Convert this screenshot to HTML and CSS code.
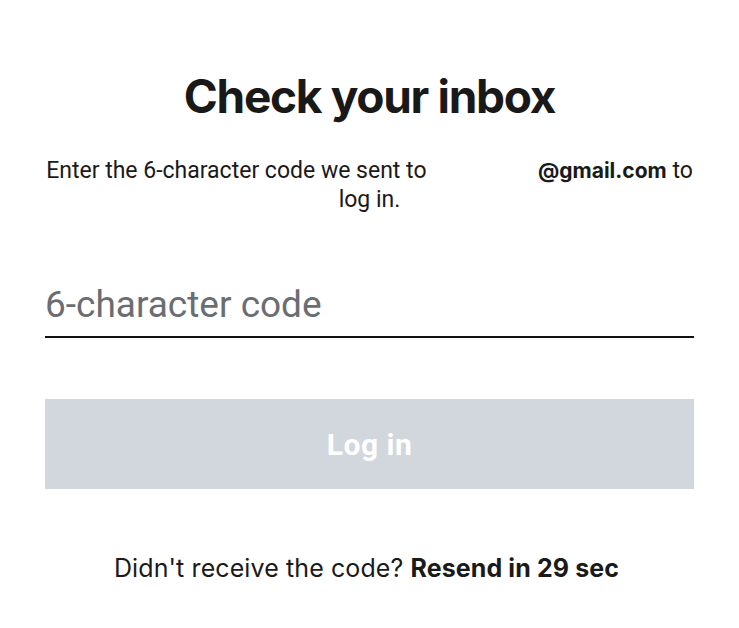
FILE: index.html
```html
<!DOCTYPE html>
<html lang="en">
<head>
<meta charset="utf-8">
<title>Check your inbox</title>
<link rel="stylesheet" href="styles.css">
</head>
<body>
<main class="page">
  <h1 class="title">Check your inbox</h1>
  <p class="subtitle">Enter the 6-character code we sent to <span class="email-blank"></span> <span class="nowrap"><b class="email">@gmail.com</b> to</span> log&nbsp;in.</p>
  <form class="form">
    <label class="field">
      <input class="code-input" type="text" placeholder="6-character code">
    </label>
    <button class="login-btn" type="button" disabled>Log in</button>
  </form>
  <p class="resend">Didn't receive the code? <b class="resend-strong">Resend in 29 sec</b></p>
</main>
</body>
</html>
```
FILE: styles.css
```css
* { box-sizing: border-box; }
html, body { margin: 0; padding: 0; background: #ffffff; }
.page {
  display: flex;
  flex-direction: column;
  padding: 0 45px;
  width: 739px;
  color: #1a1a1a;
}
.title {
  margin: 70px 0 0;
  font-family: Inter, "Liberation Sans", sans-serif;
  font-weight: 700;
  font-size: 46px;
  line-height: 52px;
  text-align: center;
  color: #191919;
  letter-spacing: -1.3px;
}
.subtitle {
  margin: 34px -2px 0;
  font-family: Roboto, "Liberation Sans", sans-serif;
  font-size: 23px;
  line-height: 29px;
  text-align: center;
  color: #1a1a1a;
}
.nowrap { white-space: nowrap; }
.email-blank {
  display: inline-block;
  width: 100px;
}
.email {
  font-family: Inter, "Liberation Sans", sans-serif;
  font-weight: 700;
  font-size: 21px;
}
.form {
  display: flex;
  flex-direction: column;
  margin-top: 67px;
}
.field { display: block; }
.code-input {
  display: block;
  width: 100%;
  border: 0;
  border-bottom: 2px solid #111111;
  padding: 0 0 8px 0;
  margin: 0;
  font-family: Roboto, "Liberation Sans", sans-serif;
  font-size: 37px;
  line-height: 48px;
  height: 57px;
  color: #1a1a1a;
  background: transparent;
  outline: none;
}
.code-input::placeholder { color: #6a6d72; }
.login-btn {
  margin-top: 61px;
  height: 90px;
  width: 100%;
  border: 0;
  background: #d2d6dd;
  color: #ffffff;
  font-family: Roboto, "Liberation Sans", sans-serif;
  font-weight: 700;
  font-size: 30px;
  letter-spacing: 0.5px;
  cursor: default;
}
.resend {
  margin: 64px 0 0;
  padding-right: 6px;
  font-family: Inter, "Liberation Sans", sans-serif;
  font-size: 25px;
  line-height: 30px;
  text-align: center;
  color: #1a1a1a;
  letter-spacing: 0.1px;
}
.resend-strong { font-weight: 700; }
```
